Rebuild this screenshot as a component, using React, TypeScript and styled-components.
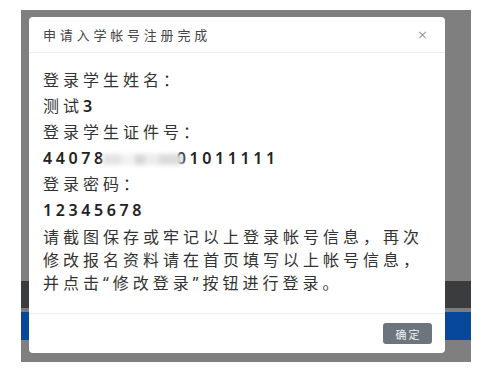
import styled, { createGlobalStyle } from 'styled-components';

const GlobalStyle = createGlobalStyle`
  html, body {
    margin: 0;
    padding: 0;
    background: #ffffff;
  }
  body {
    font-family: "Noto Sans", "Noto Sans CJK SC", sans-serif;
  }
`;

const Page = styled.div`
  width: 499px;
  height: 368px;
  padding: 10px 0 0 21px;
  box-sizing: border-box;
`;

const Screen = styled.div`
  position: relative;
  width: 450px;
  height: 352px;
  background: #7f7f7f;
  display: flex;
  flex-direction: column;
`;

const Spacer = styled.div`
  height: 271px;
`;

const Band = styled.div<{ $color: string; $height: number }>`
  height: ${(p) => p.$height}px;
  background: ${(p) => p.$color};
`;

const Modal = styled.div`
  position: absolute;
  left: 8px;
  top: 7px;
  width: 416px;
  background: #ffffff;
  border-radius: 4px;
  display: flex;
  flex-direction: column;
`;

const Header = styled.div`
  height: 35px;
  display: flex;
  align-items: center;
  justify-content: space-between;
  padding: 0 17px 0 14px;
  border-bottom: 1px solid #efefef;
`;

const Title = styled.span`
  font-family: "Noto Sans CJK SC", sans-serif;
  font-size: 13px;
  letter-spacing: 3.8px;
  color: #444;
`;

const Close = styled.span`
  font-family: "DejaVu Sans", sans-serif;
  font-size: 13px;
  color: #999;
`;

const Body = styled.div`
  padding: 14px 14px 18px;
  color: #333;
`;

const Line = styled.div<{ $digits?: boolean }>`
  font-family: "Noto Sans", "Noto Sans CJK SC", sans-serif;
  font-size: 16px;
  line-height: 26px;
  height: 26px;
  white-space: nowrap;
  font-weight: ${(p) => (p.$digits ? 600 : 400)};
  letter-spacing: ${(p) => (p.$digits ? '3.6px' : '4px')};
  color: ${(p) => (p.$digits ? '#222' : '#333')};
`;

const Mixed = styled.span`
  font-weight: 600;
  letter-spacing: 3.6px;
  color: #222;
`;

const Blur = styled.span`
  position: relative;
  z-index: 1;
  display: inline-block;
  width: 80px;
  height: 11px;
  margin: 0 -6px 0 -4px;
  vertical-align: -1px;
  background: linear-gradient(
    90deg,
    #e4e4e4 0 22%,
    #f1f1f1 22% 40%,
    #d8d8d8 40% 52%,
    #ececec 52% 70%,
    #dcdcdc 70% 100%
  );
  filter: blur(2px);
`;

const Note = styled.p`
  margin: 3px 0 0;
  font-family: "Noto Sans", "Noto Sans CJK SC", sans-serif;
  font-size: 16px;
  line-height: 23px;
  letter-spacing: 4px;
  color: #333;
  white-space: nowrap;
`;

const Footer = styled.div`
  height: 39px;
  border-top: 1px solid #efefef;
  display: flex;
  align-items: center;
  justify-content: flex-end;
  padding: 0 13px;
`;

const Button = styled.button`
  width: 49px;
  height: 21px;
  border: none;
  border-radius: 3px;
  background: #6c757d;
  color: #eef0f2;
  font-family: "Noto Sans CJK SC", sans-serif;
  font-size: 11px;
  letter-spacing: 2px;
  padding: 0 0 0 2px;
`;

export default function App() {
  return (
    <>
      <GlobalStyle />
      <Page>
        <Screen>
          <Spacer />
          <Band $color="#3a3c3e" $height={27} />
          <Band $color="#7c7c7c" $height={4} />
          <Band $color="#08489a" $height={28} />
          <Modal>
            <Header>
              <Title>申请入学帐号注册完成</Title>
              <Close>×</Close>
            </Header>
            <Body>
              <Line>登录学生姓名：</Line>
              <Line>
                测试<Mixed>3</Mixed>
              </Line>
              <Line>登录学生证件号：</Line>
              <Line $digits>
                44078
                <Blur />
                01011111
              </Line>
              <Line>登录密码：</Line>
              <Line $digits>12345678</Line>
              <Note>
                请截图保存或牢记以上登录帐号信息，再次
                <br />
                修改报名资料请在首页填写以上帐号信息，
                <br />
                并点击“修改登录”按钮进行登录。
              </Note>
            </Body>
            <Footer>
              <Button>确定</Button>
            </Footer>
          </Modal>
        </Screen>
      </Page>
    </>
  );
}
